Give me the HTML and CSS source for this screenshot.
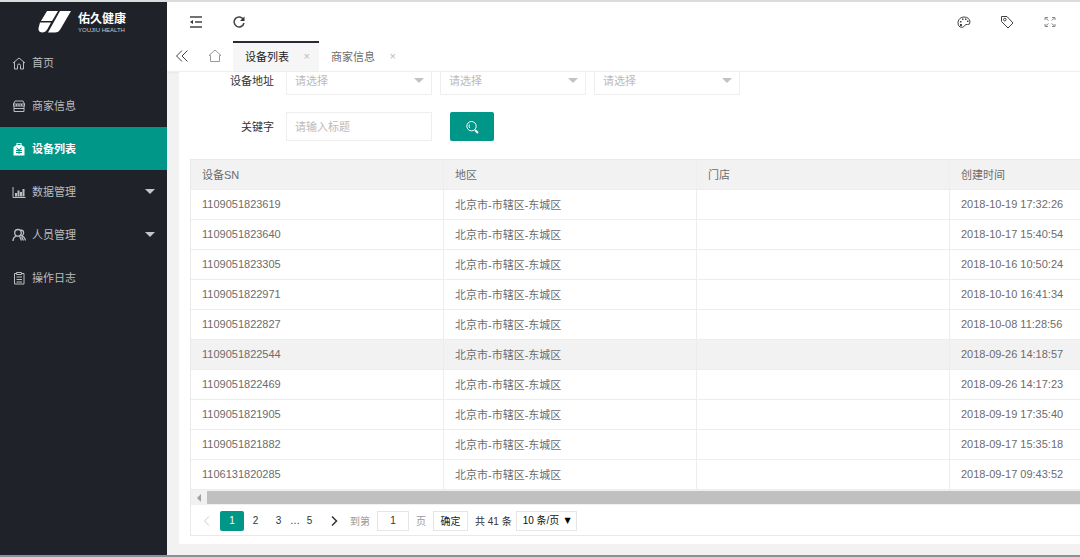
FILE: index.html
```
<!DOCTYPE html>
<html lang="zh-CN">
<head>
    <meta charset="UTF-8">
    <meta name="viewport" content="width=device-width, initial-scale=1">
    <title>设备列表</title>
    <link rel="stylesheet" href="styles.css">
</head>
<body>
    <div class="app">
        <aside class="sidebar">
            <div class="logo">
                <svg class="logo-mark" width="34" height="24" viewBox="0 0 34 24">
                    <path fill="#fff" d="M9 1h11l-6 10H3zM2 12.500h11L9.500 19Q7.500 22.500 4 22.500Q0 22 .500 18zM22 1h11L22.500 19Q20.500 22.500 17 22.500h-7z"/>
                </svg>
                <div class="logo-text">
                    <strong>佑久健康</strong>
                    <small>YOUJIU HEALTH</small>
                </div>
            </div>
            <nav class="menu">
                <a href="#" class="menu-item">
                    <svg class="icon" viewBox="0 0 14 14"><path d="M1 7L7 2l6 5M2.500 6v7h3V9.500Q5.500 8 7 8T8.500 9.500V13h3V6"/></svg>
                    <span>首页</span>
                </a>
                <a href="#" class="menu-item">
                    <svg class="icon" viewBox="0 0 14 14"><path d="M3 2h8l1.500 3v2h-11V5zM1.500 5h11M2 7v5.500h10V7M2 9.500h10M4.500 5v2M7 5v2M9.500 5v2"/></svg>
                    <span>商家信息</span>
                </a>
                <a href="#" class="menu-item active">
                    <svg class="icon" viewBox="0 0 14 14"><path fill="#fff" stroke="none" fill-rule="evenodd" d="M4.500 3V1h5v2L12.500 5v8.500h-11V5zM5.500 2v1h3V2zM4 5.500l2 2.500H4v1h2.500v1H4v1h2.500v1h1v-1H10v-1H7.500V9H10V8H8l2-2.500H9L7 7.500L5 5.500z"/></svg>
                    <span>设备列表</span>
                </a>
                <a href="#" class="menu-item">
                    <svg class="icon" viewBox="0 0 14 14"><path d="M1 2v10.500h12.500"/><path stroke-width="2" d="M4 11.500V8M6.500 11.500V5.500M9 11.500V7M11.500 11.500V4"/></svg>
                    <span>数据管理</span>
                    <i class="caret"></i>
                </a>
                <a href="#" class="menu-item">
                    <svg class="icon" viewBox="0 0 14 14"><path stroke-width="1.300" d="M6 1.500a3.300 3.300 0 1 1 0 6.600a3.300 3.300 0 1 1 0-6.600M1 13Q1 9.500 4 8M7.500 8l2 4.500M9 2q3 .500 2.500 3.500Q11.300 7 10 7.500q3 2 3.500 5M9.500 8.500l2 4"/></svg>
                    <span>人员管理</span>
                    <i class="caret"></i>
                </a>
                <a href="#" class="menu-item">
                    <svg class="icon" viewBox="0 0 14 14"><path d="M4.500 2.500h-2v10.500h9.500V2.500h-2M4.500 1.500h5v2h-5zM4.500 6h5.500M4.500 8.500h5.500M4.500 11h5.500"/></svg>
                    <span>操作日志</span>
                </a>
            </nav>
        </aside>

        <div class="page">
            <header class="topbar">
                <div class="tools">
                    <button class="tool" type="button" aria-label="收起菜单">
                        <svg class="icon dark" viewBox="0 0 14 14"><path stroke-width="1.500" d="M1 2h12M6 7h7M1 12h12"/><path fill="#333" stroke="none" d="M1 7l3-2v4z"/></svg>
                    </button>
                    <button class="tool" type="button" aria-label="刷新">
                        <svg class="icon dark" viewBox="0 0 14 14"><path stroke-width="1.500" d="M11.500 4.500A5 5 0 1 0 12 8"/><path fill="#333" stroke="none" d="M12.500 1.500v4.500H8z"/></svg>
                    </button>
                </div>
                <div class="tools">
                    <button class="tool" type="button" aria-label="主题">
                        <svg class="icon dark" viewBox="0 0 14 14"><path d="M3 12Q.500 10.500 1 7q1-4.800 6-5q5.500 0 6 5q0 3-2.500 2.500Q8 9 7.500 11Q6.500 13 3 12z"/><path fill="#444" stroke="none" d="M3 6h1.500v1.500H3zM5 3.500h1.500V5H5zM8 3.500h1.500V5H8zM10 5.500h1.500V7H10zM3 9h2v2H3z"/></svg>
                    </button>
                    <button class="tool" type="button" aria-label="便签">
                        <svg class="icon dark" viewBox="0 0 14 14"><path d="M1.500 1.500H7L13 8l-5 5L1.500 6.500z"/><circle cx="4.800" cy="4.600" r="1.300"/></svg>
                    </button>
                    <button class="tool" type="button" aria-label="全屏">
                        <svg class="icon light" viewBox="0 0 14 14"><path d="M2 5V2.500h3M2.500 3l3 2.500M9 2.500h3V5M11.500 3l-3 2.500M2 9v2.500h3M2.500 11l3-2.500M9 11.500h3V9M11.500 11l-3-2.500"/></svg>
                    </button>
                </div>
            </header>

            <div class="tabs">
                <button class="tab-prev" type="button" aria-label="向左">
                    <svg class="icon dark" viewBox="0 0 14 14"><path d="M7 1.500L1.500 7L7 12.500M12.500 1.500L7 7l5.500 5.500"/></svg>
                </button>
                <a href="#" class="tab-home" aria-label="首页">
                    <svg class="icon" viewBox="0 0 14 14"><path d="M1 6.500L7 1l6 5.500h-1.500v6h-9v-6z"/></svg>
                </a>
                <div class="tab active"><a href="#">设备列表</a><button type="button" aria-label="关闭">×</button></div>
                <div class="tab"><a href="#">商家信息</a><button type="button" aria-label="关闭">×</button></div>
            </div>

            <main class="content">
                <div class="card">
                    <form class="filter">
                        <div class="filter-row">
                            <label for="province">设备地址</label>
                            <div class="field select">
                                <select id="province"><option>请选择</option></select>
                            </div>
                            <div class="field select">
                                <select aria-label="市"><option>请选择</option></select>
                            </div>
                            <div class="field select">
                                <select aria-label="区"><option>请选择</option></select>
                            </div>
                        </div>
                        <div class="filter-row">
                            <label for="keyword">关键字</label>
                            <div class="field">
                                <input id="keyword" type="text" placeholder="请输入标题">
                            </div>
                            <button class="search" type="button" aria-label="搜索">
                                <svg class="icon" viewBox="0 0 14 14"><circle cx="6.500" cy="6.200" r="4.700"/><path d="M4.500 4.500Q3.500 6 4.500 8"/><path stroke-width="2" d="M10 10l3 3"/></svg>
                            </button>
                        </div>
                    </form>

                    <div class="table-box">
                        <div class="table-scroll">
                            <table>
                                <thead>
                                    <tr><th>设备SN</th><th>地区</th><th>门店</th><th>创建时间</th></tr>
                                </thead>
                                <tbody>
                                    <tr><td>1109051823619</td><td>北京市-市辖区-东城区</td><td></td><td>2018-10-19 17:32:26</td></tr>
                                    <tr><td>1109051823640</td><td>北京市-市辖区-东城区</td><td></td><td>2018-10-17 15:40:54</td></tr>
                                    <tr><td>1109051823305</td><td>北京市-市辖区-东城区</td><td></td><td>2018-10-16 10:50:24</td></tr>
                                    <tr><td>1109051822971</td><td>北京市-市辖区-东城区</td><td></td><td>2018-10-10 16:41:34</td></tr>
                                    <tr><td>1109051822827</td><td>北京市-市辖区-东城区</td><td></td><td>2018-10-08 11:28:56</td></tr>
                                    <tr class="hover"><td>1109051822544</td><td>北京市-市辖区-东城区</td><td></td><td>2018-09-26 14:18:57</td></tr>
                                    <tr><td>1109051822469</td><td>北京市-市辖区-东城区</td><td></td><td>2018-09-26 14:17:23</td></tr>
                                    <tr><td>1109051821905</td><td>北京市-市辖区-东城区</td><td></td><td>2018-09-19 17:35:40</td></tr>
                                    <tr><td>1109051821882</td><td>北京市-市辖区-东城区</td><td></td><td>2018-09-17 15:35:18</td></tr>
                                    <tr><td>1106131820285</td><td>北京市-市辖区-东城区</td><td></td><td>2018-09-17 09:43:52</td></tr>
                                </tbody>
                            </table>
                        </div>
                        <div class="scrollbar"><i class="scroll-left"></i><div class="scroll-thumb"></div></div>
                        <div class="pager">
                            <a href="#" class="arrow disabled" aria-label="上一页"><svg class="icon" viewBox="0 0 14 14"><path d="M9 2.500L4.500 7L9 11.500"/></svg></a>
                            <a href="#" class="num current">1</a>
                            <a href="#" class="num">2</a>
                            <a href="#" class="num">3</a>
                            <span class="dots">…</span>
                            <a href="#" class="num">5</a>
                            <a href="#" class="arrow" aria-label="下一页"><svg class="icon" viewBox="0 0 14 14"><path stroke-width="1.500" d="M5 2.500L9.500 7L5 11.500"/></svg></a>
                            <label class="jump">到第 <input type="text" value="1"> 页</label>
                            <button type="button">确定</button>
                            <span class="total">共 41 条</span>
                            <div class="limit">
                                <select aria-label="每页条数"><option>10 条/页</option></select>
                            </div>
                        </div>
                    </div>
                </div>
            </main>
        </div>
    </div>
</body>
</html>
```
FILE: styles.css
```
* {
    box-sizing: border-box;
}

body {
    margin: 0;
    font-family: "Liberation Sans", "Noto Sans CJK SC", sans-serif;
    font-size: 11px;
    color: #6c6c6c;
    background-color: #f2f2f2;
}

a {
    color: inherit;
    text-decoration: none;
}

button, input, select {
    font: inherit;
    color: inherit;
    margin: 0;
    padding: 0;
    border: none;
    border-radius: 0;
    background: none;
    appearance: none;
}

button {
    cursor: pointer;
}

.icon {
    width: 14px;
    height: 14px;
    flex: none;
    display: block;
    fill: none;
    stroke: currentColor;
}

.icon.dark {
    color: #444;
}

.icon.light {
    color: #888;
}

.app {
    display: flex;
    min-height: 100vh;
    border-top: 2px solid #d9dcdc;
    border-bottom: 2px solid #8a909c;
}

/* sidebar */
.sidebar {
    width: 167px;
    flex: none;
    background-color: #1f2229;
    color: #bcbdbf;
}

.logo {
    display: flex;
    align-items: center;
    gap: 6px;
    height: 39px;
    padding-left: 38px;
    color: #fff;
}

.logo-text {
    display: flex;
    flex-direction: column;
    padding-top: 2px;
}

.logo-text strong {
    font-size: 12px;
    line-height: 14px;
}

.logo-text small {
    font-size: 6px;
    line-height: 8px;
    color: #c8c9cc;
}

.menu-item {
    display: flex;
    align-items: center;
    gap: 6px;
    height: 43px;
    padding: 0 12px;
}

.menu-item span {
    padding-bottom: 2px;
}

.menu-item.active {
    background-color: #009688;
    color: #fff;
    font-weight: bold;
}

.caret {
    margin-left: auto;
    border: 5px solid transparent;
    border-top-color: #c4c5c7;
    border-bottom: none;
}

/* header */
.page {
    flex: 1;
    min-width: 0;
    display: flex;
    flex-direction: column;
}

.topbar {
    display: flex;
    justify-content: space-between;
    height: 39px;
    padding: 0 9px 0 7px;
    background-color: #fff;
}

.tools {
    display: flex;
}

.tool {
    display: flex;
    align-items: center;
    justify-content: center;
    width: 43px;
}

.tabs {
    display: flex;
    height: 31px;
    background-color: #fff;
    border-bottom: 1px solid #eee;
    box-shadow: 0 1px 2px rgba(0, 0, 0, 0.05);
}

.tab-prev, .tab-home {
    display: flex;
    align-items: center;
    justify-content: center;
    width: 30px;
}

.tab-home {
    width: 36px;
    color: #999;
}

.tab {
    display: flex;
    align-items: center;
    justify-content: space-between;
    width: 86px;
    padding: 0 9px 2px 12px;
    border-top: 2px solid transparent;
}

.tab.active {
    background-color: #f6f6f6;
    border-top-color: #292b34;
    color: #222;
}

.tab button {
    color: #bbb;
}

/* content */
.content {
    flex: 1;
    overflow: hidden;
    padding: 0 0 10px 12px;
}

.card {
    background-color: #fff;
    padding: 0 0 8px 11px;
}

/* the list is scrolled a little under the tabs */
.filter {
    margin-top: -6px;
    padding-bottom: 18px;
    display: flex;
    flex-direction: column;
    gap: 17px;
}

.filter-row {
    display: flex;
    align-items: center;
    gap: 8px;
}

.filter-row label {
    width: 88px;
    padding: 0 4px 2px 0;
    text-align: right;
    color: #333;
}

.field {
    position: relative;
    width: 146px;
}

.field input, .field select {
    display: block;
    width: 100%;
    height: 29px;
    padding: 0 8px;
    border: 1px solid #eee;
    background-color: #fff;
    color: #bbb;
}

.field input::placeholder {
    color: #bbb;
}

.select::after {
    content: "";
    position: absolute;
    right: 8px;
    top: 12px;
    border: 5px solid transparent;
    border-top-color: #c2c2c2;
    border-bottom: none;
    pointer-events: none;
}

.search {
    display: flex;
    align-items: center;
    justify-content: center;
    width: 44px;
    height: 29px;
    margin-left: 10px;
    border-radius: 2px;
    background-color: #009688;
    color: #fff;
}

.table-box {
    border: 1px solid #e9e9ed;
    border-right: none;
}

.table-scroll {
    overflow: hidden;
}

table {
    width: 100%;
    min-width: 1012px;
    table-layout: fixed;
    border-collapse: separate;
    border-spacing: 0;
}

th, td {
    height: 30px;
    padding: 0 11px 2px;
    border-right: 1px solid #ededf1;
    border-bottom: 1px solid #ededf1;
    font-weight: normal;
    text-align: left;
    white-space: nowrap;
}

th {
    background-color: #f2f2f2;
    border-right-color: #eee;
}

.hover td {
    background-color: #f2f2f2;
}

.scrollbar {
    display: flex;
    align-items: center;
    height: 15px;
    background-color: #f1f1f1;
}

.scroll-left {
    margin: 0 6px;
    border: 4px solid transparent;
    border-right-color: #a0a0a0;
    border-left: none;
}

.scroll-thumb {
    flex: 1;
    height: 13px;
    background-color: #c0c0c1;
}

.pager {
    display: flex;
    align-items: center;
    height: 30px;
    padding: 1px 0 0 3px;
    font-size: 10px;
    color: #333;
}

.pager .num {
    width: 23px;
    line-height: 20px;
    text-align: center;
}

.pager .current {
    width: 24px;
    background-color: #009688;
    color: #fff;
    border-radius: 2px;
}

.arrow {
    display: flex;
    justify-content: center;
    width: 26px;
}

.arrow.disabled {
    color: #ccc;
}

.dots {
    width: 8px;
    text-align: center;
}

.jump {
    display: flex;
    align-items: center;
    gap: 7px;
    margin-left: 3px;
    color: #999;
}

.jump input {
    width: 32px;
    height: 20px;
    border: 1px solid #e6e6e6;
    text-align: center;
    color: #333;
}

.pager button {
    width: 35px;
    height: 20px;
    margin: 0 7px;
    border: 1px solid #e6e6e6;
    color: #222;
}

.limit {
    position: relative;
    margin-left: 4px;
}

.limit select {
    display: block;
    width: 61px;
    height: 20px;
    padding-left: 6px;
    border: 1px solid #e6e6e6;
    color: #111;
}

.limit::after {
    content: "▼";
    position: absolute;
    right: 6px;
    top: 0;
    font-family: "DejaVu Sans", sans-serif;
    font-size: 8px;
    line-height: 20px;
    color: #000;
    pointer-events: none;
}
```
